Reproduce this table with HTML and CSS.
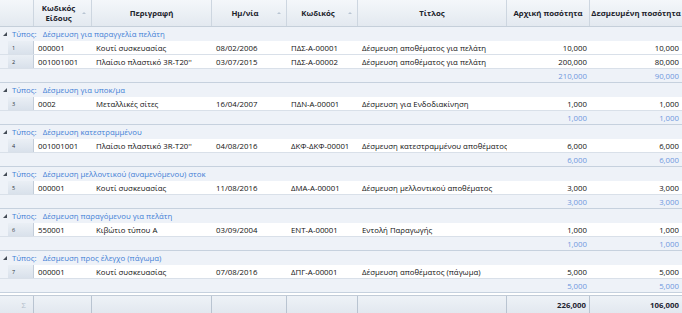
FILE: index.html
```html
<!DOCTYPE html>
<html lang="el">
<head>
<meta charset="utf-8">
<link rel="stylesheet" href="styles.css">
</head>
<body>
<div class="grid">
  <div class="row head">
    <div class="hc"></div>
    <div class="hc sort"><span>Κωδικός<br>Είδους</span><i class="arr"></i></div>
    <div class="hc"><span>Περιγραφή</span></div>
    <div class="hc sort"><span>Ημ/νία</span><i class="arr"></i></div>
    <div class="hc sort"><span>Κωδικός</span><i class="arr"></i></div>
    <div class="hc"><span>Τίτλος</span></div>
    <div class="hc"><span>Αρχική ποσότητα</span></div>
    <div class="hc"><span>Δεσμευμένη ποσότητα</span></div>
  </div>

  <div class="group"><span class="tri"></span><span class="gl">Τύπος:</span><span class="gv">Δέσμευση για παραγγελία πελάτη</span></div>
  <div class="row data"><div class="ind"><span class="btn">1</span></div><div>000001</div><div>Κουτί συσκευασίας</div><div>08/02/2006</div><div>ΠΔΣ-Α-00001</div><div>Δέσμευση αποθέματος για πελάτη</div><div class="num">10,000</div><div class="num">10,000</div></div>
  <div class="row data"><div class="ind"><span class="btn">2</span></div><div>001001001</div><div>Πλαίσιο πλαστικό 3R-T20''</div><div>03/07/2015</div><div>ΠΔΣ-Α-00002</div><div>Δέσμευση αποθέματος για πελάτη</div><div class="num">200,000</div><div class="num">80,000</div></div>
  <div class="row sum"><div></div><div></div><div></div><div></div><div></div><div></div><div class="num">210,000</div><div class="num">90,000</div></div>

  <div class="group"><span class="tri"></span><span class="gl">Τύπος:</span><span class="gv">Δέσμευση για υποκ/μα</span></div>
  <div class="row data"><div class="ind"><span class="btn">3</span></div><div>0002</div><div>Μεταλλικές σίτες</div><div>16/04/2007</div><div>ΠΔΝ-Α-00001</div><div>Δέσμευση για Ενδοδιακίνηση</div><div class="num">1,000</div><div class="num">1,000</div></div>
  <div class="row sum"><div></div><div></div><div></div><div></div><div></div><div></div><div class="num">1,000</div><div class="num">1,000</div></div>

  <div class="group"><span class="tri"></span><span class="gl">Τύπος:</span><span class="gv">Δέσμευση κατεστραμμένου</span></div>
  <div class="row data"><div class="ind"><span class="btn">4</span></div><div>001001001</div><div>Πλαίσιο πλαστικό 3R-T20''</div><div>04/08/2016</div><div>ΔΚΦ-ΔΚΦ-00001</div><div>Δέσμευση κατεστραμμένου αποθέματος</div><div class="num">6,000</div><div class="num">6,000</div></div>
  <div class="row sum"><div></div><div></div><div></div><div></div><div></div><div></div><div class="num">6,000</div><div class="num">6,000</div></div>

  <div class="group"><span class="tri"></span><span class="gl">Τύπος:</span><span class="gv">Δέσμευση μελλοντικού (αναμενόμενου) στοκ</span></div>
  <div class="row data"><div class="ind"><span class="btn">5</span></div><div>000001</div><div>Κουτί συσκευασίας</div><div>11/08/2016</div><div>ΔΜΑ-Α-00001</div><div>Δέσμευση μελλοντικού αποθέματος</div><div class="num">3,000</div><div class="num">3,000</div></div>
  <div class="row sum"><div></div><div></div><div></div><div></div><div></div><div></div><div class="num">3,000</div><div class="num">3,000</div></div>

  <div class="group"><span class="tri"></span><span class="gl">Τύπος:</span><span class="gv">Δέσμευση παραγόμενου για πελάτη</span></div>
  <div class="row data"><div class="ind"><span class="btn">6</span></div><div>550001</div><div>Κιβώτιο τύπου Α</div><div>03/09/2004</div><div>ENT-A-00001</div><div>Εντολή Παραγωγής</div><div class="num">1,000</div><div class="num">1,000</div></div>
  <div class="row sum"><div></div><div></div><div></div><div></div><div></div><div></div><div class="num">1,000</div><div class="num">1,000</div></div>

  <div class="group"><span class="tri"></span><span class="gl">Τύπος:</span><span class="gv">Δέσμευση προς έλεγχο (πάγωμα)</span></div>
  <div class="row data"><div class="ind"><span class="btn">7</span></div><div>000001</div><div>Κουτί συσκευασίας</div><div>07/08/2016</div><div>ΔΠΓ-Α-00001</div><div>Δέσμευση αποθέματος (πάγωμα)</div><div class="num">5,000</div><div class="num">5,000</div></div>
  <div class="row sum"><div></div><div></div><div></div><div></div><div></div><div></div><div class="num">5,000</div><div class="num">5,000</div></div>

  <div class="spacer"></div>

  <div class="row foot">
    <div class="sig">Σ</div><div></div><div></div><div></div><div></div><div></div><div class="num">226,000</div><div class="num">106,000</div>
  </div>
</div>
</body>
</html>
```

FILE: styles.css
```css
* { box-sizing: border-box; }
html, body { margin: 0; padding: 0; background: #fff; }
body {
  font-family: "Open Sans", "DejaVu Sans", sans-serif;
  font-size: 7.8px;
  color: #111;
  width: 682px;
  height: 313px;
  overflow: hidden;
}
.grid { display: flex; flex-direction: column; height: 313px; }
.row {
  display: grid;
  grid-template-columns: 34px 58px 120px 75px 71px 149px 83px 92px;
}
.row > div { display: flex; align-items: center; white-space: nowrap; overflow: hidden; padding: 0 3px 0 4px; }
.row > .num { justify-content: flex-end; padding-right: 3px; }

.head {
  height: 27px;
  background: linear-gradient(#f4f7fa, #e3e9f0);
  border-bottom: 1px solid #c5cfda;
}
.head .hc {
  justify-content: center;
  text-align: center;
  font-weight: 700;
  color: #1c232c;
  border-right: 1px solid #cdd6e0;
  line-height: 10px;
  position: relative;
  padding: 0 1px;
}
.head .hc:last-child { border-right: none; }
.head .sort span { margin-right: 8px; }
.arr {
  position: absolute;
  right: 5px;
  top: 12px;
  width: 0; height: 0;
  border-left: 2px solid transparent;
  border-right: 2px solid transparent;
  border-bottom: 2px solid #b9c5d3;
}

.group {
  height: 14px;
  background: #eef2f8;
  display: flex;
  align-items: center;
  color: #3f7ed6;
  white-space: nowrap;
  padding-left: 3px;
}
.tri {
  width: 0; height: 0;
  border-left: 4px solid transparent;
  border-bottom: 4px solid #444c57;
  margin-right: 5px;
}
.gl { margin-right: 6px; }

.data { height: 14px; background: #fff; border-bottom: 1px solid #d9e0e9; }
.data > .ind { padding: 0; background: #eef2f8; }
.btn {
  margin-left: 8px;
  width: 26px;
  height: 100%;
  background: linear-gradient(#eaeff5, #d9e1eb);
  border-right: 1px solid #c3cdd9;
  font-size: 5.5px;
  padding-left: 4px;
  display: flex;
  align-items: center;
  color: #2c3440;
}

.sum {
  height: 14px;
  background: #eef2f8;
  border-bottom: 1px solid #c6d1de;
  color: #6e98de;
}

.spacer { height: 2px; background: #fff; }

.foot {
  height: 18px;
  background: linear-gradient(#eef2f7, #e2e8ef);
  border-top: 1px solid #c2ccd8;
  font-weight: 700;
  color: #1d2430;
}
.foot > div { border-right: 1px solid #b9c4d1; }
.foot > div:last-child { border-right: none; }
.foot .sig { color: #b5bfcc; font-weight: 400; justify-content: flex-end; padding-right: 7px; }
```
